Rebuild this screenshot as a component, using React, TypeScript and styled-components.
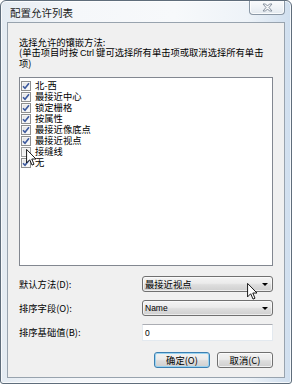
import React from "react";
import styled, { createGlobalStyle } from "styled-components";

const GlobalStyle = createGlobalStyle`
  html, body { margin: 0; padding: 0; background: #ffffff; }
  body { font-family: "Liberation Sans", "Noto Sans CJK SC", sans-serif; }
  #root { width: 292px; height: 384px; }
`;

const Window = styled.div`
  position: relative;
  box-sizing: border-box;
  width: 292px;
  height: 384px;
  border: 1px solid #5f6d7b;
  border-radius: 6px 6px 3px 3px;
  background: linear-gradient(to right, #e4ebf2 0%, #f5f7fa 25%, #f7f9fb 60%, #eef3f8 85%, #cfdeee 100%);
  box-shadow: inset 0 0 0 1px rgba(255, 255, 255, 0.75);
  display: flex;
  flex-direction: column;
  padding: 0 6px 5px 6px;
  overflow: hidden;
`;

const TitleBar = styled.div`
  height: 22px;
  display: flex;
  align-items: flex-start;
`;

const Title = styled.div`
  margin: 5px 0 0 3px;
  font-family: "Noto Sans CJK SC", sans-serif;
  font-size: 10.5px;
  line-height: 13px;
  color: #1a1a1a;
  white-space: nowrap;
`;

const CloseButton = styled.div`
  margin-left: auto;
  margin-top: -1px;
  width: 36px;
  height: 15px;
  box-sizing: border-box;
  border: 1px solid #8a97a5;
  border-top: none;
  border-radius: 0 0 4px 4px;
  background: linear-gradient(to bottom, #fbfcfd 0%, #eef2f6 60%, #e3e9ef 100%);
  box-shadow: inset 0 0 0 1px rgba(255, 255, 255, 0.8);
  display: flex;
  align-items: center;
  justify-content: center;
`;

const Client = styled.div`
  flex: 1;
  box-sizing: border-box;
  border: 1px solid #98a3ae;
  background: #f0f0f0;
  padding: 14px 11px 9px 11px;
  display: flex;
  flex-direction: column;
`;

const Text = styled.div`
  font-family: "Noto Sans CJK SC", sans-serif;
  font-size: 9.3px;
  line-height: 10px;
  color: #000;
  white-space: nowrap;
`;

const Latin = styled.span`
  font-family: "Liberation Sans", sans-serif;
  font-size: 9px;
`;

const ListBox = styled.div`
  margin-top: 9px;
  height: 189px;
  box-sizing: border-box;
  border: 1px solid #828790;
  background: #ffffff;
  padding: 2px 1px;
  display: flex;
  flex-direction: column;
`;

const Item = styled.div`
  height: 11px;
  display: flex;
  align-items: center;
  gap: 4px;
`;

const Box = styled.div<{ $checked: boolean }>`
  width: 10px;
  height: 10px;
  box-sizing: border-box;
  border: 1px solid #8e8f8f;
  background: linear-gradient(135deg, #dcdcdc 0%, #f4f4f4 60%, #ffffff 100%);
  box-shadow: inset 0 0 0 1px #f6f6f6;
  display: flex;
  align-items: center;
  justify-content: center;
  opacity: ${(p) => (p.$checked ? 1 : 0.85)};
`;

const ItemText = styled.span`
  font-family: "Noto Sans CJK SC", sans-serif;
  font-size: 9.3px;
  line-height: 11px;
  color: #000;
  white-space: nowrap;
`;

const Form = styled.div`
  margin-top: 10px;
  display: grid;
  grid-template-columns: 1fr 131px;
  row-gap: 8px;
  align-items: center;
`;

const Label = styled.div`
  font-family: "Noto Sans CJK SC", sans-serif;
  font-size: 9.3px;
  line-height: 11px;
  color: #000;
  white-space: nowrap;
`;

const Combo = styled.div`
  height: 16px;
  box-sizing: border-box;
  border: 1px solid #707070;
  border-radius: 3px;
  background: linear-gradient(to bottom, #f4f4f4 0%, #ebebeb 45%, #dedede 55%, #cfcfcf 100%);
  box-shadow: inset 0 0 0 1px rgba(255, 255, 255, 0.6);
  display: flex;
  align-items: center;
  padding: 0 4px 0 2px;
  font-family: "Noto Sans CJK SC", sans-serif;
  font-size: 9.3px;
  color: #000;
`;

const ComboLatin = styled.span`
  font-family: "Liberation Sans", sans-serif;
  font-size: 8.5px;
`;

const Arrow = styled.div`
  margin-left: auto;
  width: 0;
  height: 0;
  border-left: 3px solid transparent;
  border-right: 3px solid transparent;
  border-top: 3px solid #000;
`;

const Input = styled.div`
  height: 17px;
  box-sizing: border-box;
  border: 1px solid #e3e9ef;
  border-top-color: #abadb3;
  background: #ffffff;
  display: flex;
  align-items: center;
  padding: 0 2px;
  font-family: "Liberation Sans", sans-serif;
  font-size: 8.5px;
  color: #000;
`;

const ButtonRow = styled.div`
  margin-top: 11px;
  display: flex;
  justify-content: flex-end;
  gap: 7px;
`;

const Button = styled.div<{ $default?: boolean }>`
  width: 56px;
  height: 16px;
  box-sizing: border-box;
  border: 1px solid ${(p) => (p.$default ? "#3c7fb1" : "#707070")};
  border-radius: 3px;
  background: linear-gradient(to bottom, #f2f2f2 0%, #ebebeb 45%, #dddddd 55%, #cfcfcf 100%);
  box-shadow: inset 0 0 0 1px ${(p) => (p.$default ? "#9ad3f0" : "rgba(255,255,255,0.7)")};
  display: flex;
  align-items: center;
  justify-content: center;
  font-family: "Noto Sans CJK SC", sans-serif;
  font-size: 9.3px;
  color: #000;
  white-space: nowrap;
`;

const Cursor = styled.svg<{ $x: number; $y: number }>`
  position: absolute;
  left: ${(p) => p.$x}px;
  top: ${(p) => p.$y}px;
  pointer-events: none;
`;

const Check = () => (
  <svg width="8" height="8" viewBox="0 0 8 8">
    <path d="M1 4.2 L3 6.3 L7 1.2" fill="none" stroke="#3d5a9e" strokeWidth="1.6" />
  </svg>
);

const CursorIcon = ({ x, y }: { x: number; y: number }) => (
  <Cursor $x={x} $y={y} width="11" height="17" viewBox="0 0 12 19">
    <path
      d="M0.5 0.5 L0.5 15.5 L4 12 L6.6 18 L8.8 17 L6.3 11.2 L11 11.2 Z"
      fill="#ffffff"
      stroke="#000000"
      strokeWidth="1"
      strokeLinejoin="round"
    />
  </Cursor>
);

const items: { label: string; checked: boolean }[] = [
  { label: "北-西", checked: true },
  { label: "最接近中心", checked: true },
  { label: "锁定栅格", checked: true },
  { label: "按属性", checked: true },
  { label: "最接近像底点", checked: true },
  { label: "最接近视点", checked: true },
  { label: "接缝线", checked: false },
  { label: "无", checked: true },
];

export default function App() {
  return (
    <>
      <GlobalStyle />
      <Window>
        <TitleBar>
          <Title>配置允许列表</Title>
          <CloseButton>
            <svg width="11" height="9" viewBox="0 0 11 9">
              <path
                d="M1 1 L3.5 1 L5.5 3 L7.5 1 L10 1 L7 4.5 L10 8 L7.5 8 L5.5 6 L3.5 8 L1 8 L4 4.5 Z"
                fill="#f4f6f8"
                stroke="#7d8896"
                strokeWidth="0.9"
                strokeLinejoin="round"
              />
            </svg>
          </CloseButton>
        </TitleBar>
        <Client>
          <Text>选择允许的镶嵌方法:</Text>
          <Text>
            (单击项目时按 <Latin>Ctrl</Latin> 键可选择所有单击项或取消选择所有单击
          </Text>
          <Text>项)</Text>
          <ListBox>
            {items.map((it) => (
              <Item key={it.label}>
                <Box $checked={it.checked}>{it.checked && <Check />}</Box>
                <ItemText>{it.label}</ItemText>
              </Item>
            ))}
          </ListBox>
          <Form>
            <Label>默认方法(D):</Label>
            <Combo>
              最接近视点
              <Arrow />
            </Combo>
            <Label>排序字段(O):</Label>
            <Combo>
              <ComboLatin>Name</ComboLatin>
              <Arrow />
            </Combo>
            <Label>排序基础值(B):</Label>
            <Input>0</Input>
          </Form>
          <ButtonRow>
            <Button $default>确定(O)</Button>
            <Button>取消(C)</Button>
          </ButtonRow>
        </Client>
        <CursorIcon x={25} y={148} />
        <CursorIcon x={246} y={282} />
      </Window>
    </>
  );
}
